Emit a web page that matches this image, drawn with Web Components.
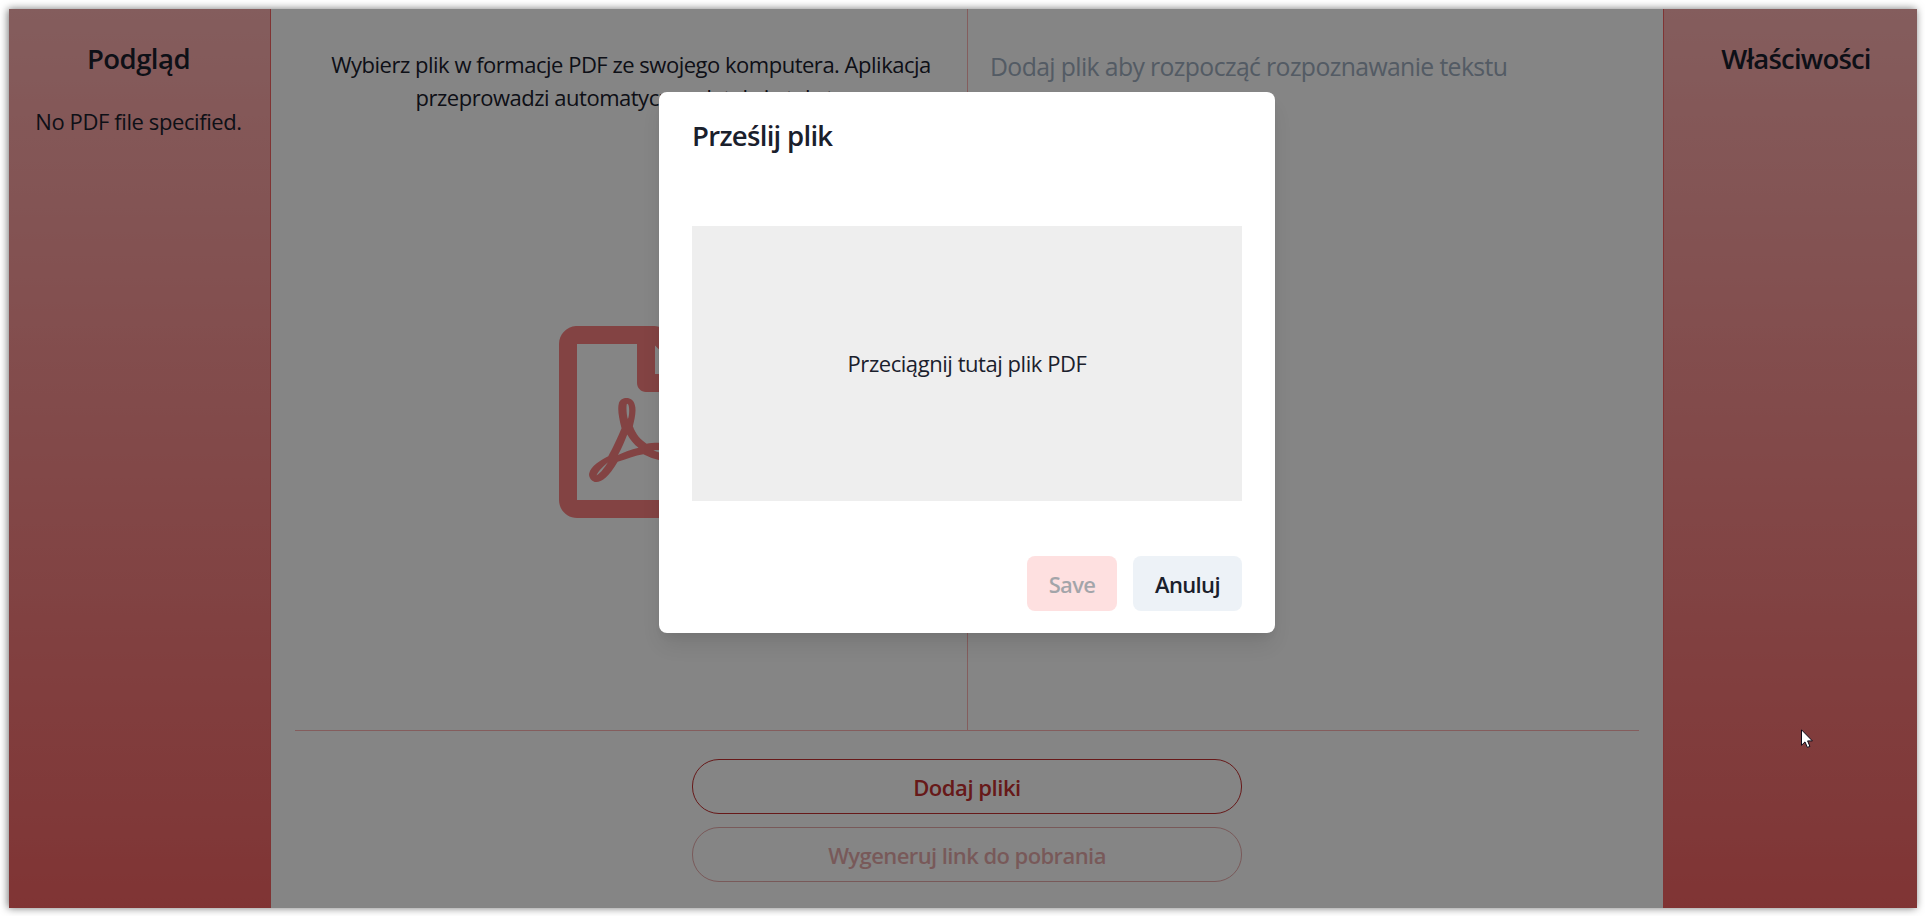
<!DOCTYPE html>
<html lang="pl">
<head>
<meta charset="utf-8">
<title>PDF</title>
<style>
html,body{margin:0;height:100%;background:#fff;overflow:hidden}
body{font-family:"Open Sans","Noto Sans",sans-serif;font-size:22px;line-height:33px;color:#1a202c}
</style>
</head>
<body>
<ocr-app></ocr-app>
<script>
const define = (name, html) => customElements.define(name, class extends HTMLElement {
  constructor() {
    super();
    const t = document.createElement('template');
    t.innerHTML = html;
    this.attachShadow({mode: 'open'}).append(t.content.cloneNode(true));
  }
});

define('side-panel', `
<style>
:host{display:block;box-sizing:border-box;background:linear-gradient(#feb2b2,#f56565);text-align:center;padding-top:33px}
h2{margin:0 0 30px;font-size:27.5px;line-height:33px;font-weight:600;letter-spacing:var(--title-spacing,-.55px)}
div{letter-spacing:-.4px}
</style>
<h2><slot name="title"></slot></h2>
<div><slot></slot></div>`);

define('pdf-icon', `
<style>:host{display:block;width:144px;height:192px;color:#fc8181}svg{display:block;width:100%;height:100%}</style>
<svg viewBox="0 0 384 512" fill="currentColor"><path d="M369.9 97.9L286 14C277 5 264.8-.1 252.1-.1H48C21.5 0 0 21.5 0 48v416c0 26.5 21.5 48 48 48h288c26.5 0 48-21.5 48-48V131.9c0-12.7-5.1-25-14.1-34zM332.1 128H256V51.9l76.1 76.1zM48 464V48h160v104c0 13.3 10.7 24 24 24h104v288H48zm250.2-143.7c-12.2-12-47-8.7-64.4-6.5-17.2-10.5-28.7-25-36.8-46.3 3.9-16.1 10.1-40.6 5.4-56-4.2-26.2-37.8-23.6-42.6-5.9-4.4 16.1-.4 38.5 7 67.1-10 23.9-24.9 56-35.4 74.4-20 10.3-47 26.2-51 46.2-3.3 15.8 26 55.2 76.1-31.2 22.4-7.4 46.8-16.5 68.4-20.1 18.9 10.2 41 17 55.8 17 25.5 0 28-28.2 17.5-38.7zm-198.1 77.8c5.1-13.7 24.5-29.5 30.4-35-19 30.3-30.4 35.7-30.4 35zm81.6-190.6c7.4 0 6.7 32.1 1.8 40.8-4.4-13.9-4.3-40.8-1.8-40.8zm-24.4 136.6c9.7-16.9 18-37 24.7-54.7 8.3 15.1 18.9 27.2 30.1 35.5-20.8 4.3-38.9 13.1-54.8 19.2zm131.6-5s-5 6-37.3-7.8c35.1-2.6 40.9 5.4 37.3 7.8z"/></svg>`);

define('outline-button', `
<style>
:host{display:block;width:550px}
button{box-sizing:border-box;display:block;width:100%;height:55px;padding:2px 0 0;border:1px solid #c53030;border-radius:27px;background:none;color:#c53030;font:600 22px/33px "Open Sans","Noto Sans",sans-serif;letter-spacing:var(--ls,-.45px)}
:host([disabled]) button{opacity:.4}
</style>
<button type="button"><slot></slot></button>`);

define('solid-button', `
<style>
:host{display:block}
button{box-sizing:border-box;display:block;width:100%;height:55px;padding:2px 0 0;border:0;border-radius:8px;background:var(--bg);color:#1a202c;font:600 22px/33px "Open Sans","Noto Sans",sans-serif;letter-spacing:-.65px}
:host([disabled]) button{opacity:.4}
</style>
<button type="button"><slot></slot></button>`);

define('upload-dialog', `
<style>
:host{box-sizing:border-box;display:flex;flex-direction:column;width:616px;height:541px;padding:23px 33px 22px;background:#fff;border-radius:8px;box-shadow:0 14px 21px -4px rgba(0,0,0,.1),0 6px 8px -3px rgba(0,0,0,.05)}
h3{margin:0;font-size:27.5px;line-height:42px;font-weight:600;letter-spacing:-.7px}
.drop{margin-top:69px;height:275px;background:#eee;display:flex;align-items:center;justify-content:center;letter-spacing:-.45px}
footer{margin-top:55px;display:flex;justify-content:flex-end;gap:16px}
.save{width:90px;--bg:#feb2b2}
.cancel{width:109px;--bg:#edf2f7}
</style>
<h3>Prześlij plik</h3>
<div class="drop">Przeciągnij tutaj plik PDF</div>
<footer><solid-button class="save" disabled>Save</solid-button><solid-button class="cancel">Anuluj</solid-button></footer>`);

define('mouse-pointer', `
<style>:host{display:block;width:12px;height:19px}svg{display:block}</style>
<svg width="12" height="19" viewBox="0 0 12 19"><path d="M.5.8V16.3L4 12.9 6.4 18.4 8.9 17.4 6.6 11.9H11.4Z" fill="#fff" stroke="#0c0a18"/></svg>`);

define('ocr-app', `
<style>
:host{position:relative;display:grid;grid-template-columns:262px 1392px 254px;width:1908px;height:899px;margin:9px 0 0 9px;box-shadow:-1px 0 8px rgba(0,0,0,.55)}
.left{border-right:1px solid #f56565;padding-right:2px}
.right{border-left:1px solid #f56565;padding-left:11px;--title-spacing:-.8px}
main{display:flex;flex-direction:column;padding:0 24px}
.cols{height:721px;display:grid;grid-template-columns:672px 672px;border-bottom:1px solid #feb2b2}
.pick{box-sizing:border-box;padding-top:39px;display:flex;flex-direction:column;align-items:center;text-align:center;letter-spacing:-.49px;gap:212px}
.pick p{margin:0}
.result{box-sizing:border-box;padding:39px 0 0 22px;border-left:1px solid #feb2b2;font-size:24.75px;line-height:37px;color:#a0aec0;letter-spacing:-.61px}
.actions{padding-top:28px;display:flex;flex-direction:column;align-items:center;gap:13px}
.overlay{position:absolute;inset:0;background:rgba(0,0,0,.48)}
.modal{position:absolute;left:650px;top:83px}
.pointer{position:absolute;left:1792px;top:720px}
</style>
<side-panel class="left"><span slot="title">Podgląd</span>No PDF file specified.</side-panel>
<main>
  <section class="cols">
    <div class="pick"><p>Wybierz plik w formacje PDF ze swojego komputera. Aplikacja<br>przeprowadzi automatyczną detekcję tekstu</p><pdf-icon></pdf-icon></div>
    <div class="result">Dodaj plik aby rozpocząć rozpoznawanie tekstu</div>
  </section>
  <section class="actions">
    <outline-button>Dodaj pliki</outline-button>
    <outline-button disabled style="--ls:-.58px">Wygeneruj link do pobrania</outline-button>
  </section>
</main>
<side-panel class="right"><span slot="title">Właściwości</span></side-panel>
<div class="overlay"></div>
<upload-dialog class="modal"></upload-dialog>
<mouse-pointer class="pointer"></mouse-pointer>`);
</script>
</body>
</html>
